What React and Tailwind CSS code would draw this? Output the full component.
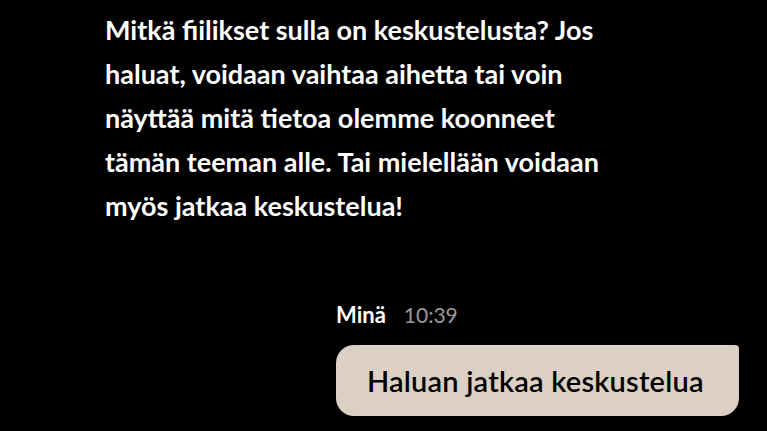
export default function App() {
  return (
    <div className="h-[431px] w-full overflow-hidden bg-black" style={{ fontFamily: "Lato, 'Noto Sans', sans-serif" }}>
      <div className="pl-[105px] pt-[8px]">
        <p className="text-[27px] font-bold leading-[44px] text-white">
          Mitkä fiilikset sulla on keskustelusta? Jos
          <br />
          haluat, voidaan vaihtaa aihetta tai voin
          <br />
          näyttää mitä tietoa olemme koonneet
          <br />
          tämän teeman alle. Tai mielellään voidaan
          <br />
          myös jatkaa keskustelua!
        </p>
      </div>
      <div className="mt-[70px] flex flex-col items-end pr-[28px]">
        <div className="w-[403px]">
          <div className="flex items-baseline gap-[18px]">
            <span className="text-[22px] font-bold text-white">Minä</span>
            <span className="text-[21px] text-[#9a9a9a]">10:39</span>
          </div>
          <div className="mt-[14px] flex h-[71px] items-center rounded-[18px] rounded-tr-[4px] bg-[#dccfc4] pl-[31px]">
            <span className="text-[29px] font-semibold tracking-[0.2px] text-black">Haluan jatkaa keskustelua</span>
          </div>
        </div>
      </div>
    </div>
  );
}
